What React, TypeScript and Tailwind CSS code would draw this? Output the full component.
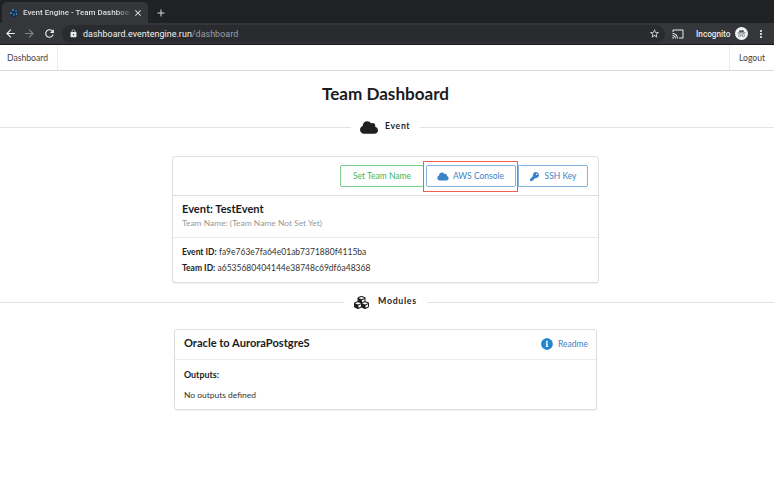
import type { ReactNode } from "react";
import { FaCloud, FaCubes, FaInfoCircle, FaKey } from "react-icons/fa";
import {
  MdAdd,
  MdArrowBack,
  MdArrowForward,
  MdCast,
  MdClose,
  MdLock,
  MdMoreVert,
  MdRefresh,
  MdStarBorder,
} from "react-icons/md";

function Favicon() {
  return (
    <svg viewBox="0 0 10 10" className="size-[10px] shrink-0">
      <path d="M3 1h4l2 3-1 4-3 2-3-2-1-4z" fill="#14304d" />
      <path d="M3 1h2v2H3zM1 4h2v2H1z" fill="#3978ad" />
      <path d="M6 2h2v2H6zM4 5h2v3H4z" fill="#235e93" />
      <path d="M7 5h1v2H7z" fill="#4a88b8" />
    </svg>
  );
}

function IncognitoBadge() {
  return (
    <svg viewBox="0 0 14 14" className="ml-[5px] size-[13px] shrink-0">
      <circle cx="7" cy="7" r="7" fill="#f1f3f4" />
      <path d="M4.3 5.6 5 3.2l2 .5 2-.5.7 2.4z" fill="#4a4d51" />
      <path d="M2.6 6.4h8.8" stroke="#4a4d51" strokeWidth="0.8" />
      <g fill="none" stroke="#4a4d51" strokeWidth="0.6">
        <circle cx="4.9" cy="9.2" r="1.3" />
        <circle cx="9.1" cy="9.2" r="1.3" />
        <path d="M6.2 9q.8-.5 1.6 0" />
      </g>
    </svg>
  );
}

function BrowserChrome() {
  return (
    <header className="h-[45px] border-b border-[#17181a] bg-[#202124] font-[Roboto,sans-serif]">
      <div className="flex h-[23px] items-end pl-[2px]">
        <div className="flex h-[21px] w-[146px] items-center rounded-t-[5px] bg-[#35363a] pl-[7px]">
          <Favicon />
          <div className="ml-[4px] w-[107px] bg-linear-to-r from-[#e8eaed] from-88% to-[#45464a] bg-clip-text text-[8px] leading-[14px] font-medium whitespace-nowrap text-transparent">
            Event Engine - Team Dashboar
          </div>
          <MdClose className="ml-[3px] size-[10px] shrink-0 text-[#f5f5f5]" />
        </div>
        <MdAdd className="mb-[4px] ml-[7px] size-[12px] text-[#d5d7da]" />
      </div>
      <div className="flex h-[21px] items-center bg-[#35363a] pl-[4px]">
        <MdArrowBack className="size-[13px] text-[#f1f3f4]" />
        <MdArrowForward className="ml-[6px] size-[13px] text-[#85878a]" />
        <MdRefresh className="ml-[7px] size-[13px] text-[#f1f3f4]" />
        <div className="ml-[6px] flex h-[18px] w-[603px] items-center rounded-full bg-[#292b2e] pr-[5px] pl-[7px]">
          <MdLock className="size-[9px] text-[#e8eaed]" />
          <div className="ml-[5px] text-[8.9px] leading-[14px] tracking-[0.06px] text-[#9aa0a6]">
            <span className="text-[#f1f3f4]">dashboard.eventengine.run</span>
            /dashboard
          </div>
          <MdStarBorder className="ml-auto size-[11px] text-[#e0e2e5]" />
        </div>
        <MdCast className="ml-[7px] size-[12px] text-[#e8eaed]" />
        <span className="ml-[12px] text-[8.2px] leading-[14px] font-medium text-[#e8eaed]">Incognito</span>
        <IncognitoBadge />
        <MdMoreVert className="ml-[7px] size-[12px] text-[#f1f3f4]" />
      </div>
    </header>
  );
}

function Divider({ children }: { children: ReactNode }) {
  return (
    <div className="flex h-[16px] items-center">
      <div className="h-px flex-1 bg-[#e2e3e3]" />
      {children}
      <div className="h-px flex-1 bg-[#e2e3e3]" />
    </div>
  );
}

export default function App() {
  return (
    <div className="h-[483px] w-[774px] overflow-hidden bg-white font-[Lato,sans-serif] text-[#1f1f1f]">
      <BrowserChrome />
      <nav className="flex h-[26px] justify-between border-b border-[#d9dadb] text-[8.6px] leading-[26px] text-[#444]">
        <a className="w-[58px] border-r border-[#ececec] pl-[7px]">Dashboard</a>
        <a className="w-[45px] border-l border-[#ececec] pl-[9px]">Logout</a>
      </nav>
      <main className="-ml-[3px]">
        <h1 className="mt-[12px] h-[22px] text-center text-[17.1px] leading-[22px] font-bold text-[#1b1c1d]">
          Team Dashboard
        </h1>
        <div className="mt-[14px]">
          <Divider>
            <h2 className="flex w-[69px] items-center pl-[9px] text-[8.7px] leading-[12px] font-bold tracking-[0.65px]">
              <FaCloud className="h-[15px] w-[18px]" />
              <span className="-mt-[2px] ml-[7px]">Event</span>
            </h2>
          </Divider>
        </div>

        <section className="mx-auto mt-[21px] h-[127px] w-[427px] rounded-[3px] border border-[#dcddde] shadow-[0_1px_1px_#f0f0f0]">
          <div className="flex h-[39px] items-center justify-end border-b border-[#dcddde] pr-[10px] text-[8.5px] leading-[20px]">
            <button className="h-[22px] w-[84px] rounded-[2px] border border-[#7bcd8c] text-[#3fb858]">
              Set Team Name
            </button>
            <div className="-ml-px flex h-[31px] w-[95px] items-center justify-center bg-[rgb(240,96,77)] p-px">
              <div className="flex h-full w-full items-center justify-center bg-white">
                <button className="flex h-[22px] w-[90px] items-center justify-center rounded-[2px] border border-[#86b4e0] text-[#3b83c8]">
                  <FaCloud className="mr-[4px] h-[9px] w-[12px]" />
                  AWS Console
                </button>
              </div>
            </div>
            <button className="flex h-[22px] w-[70px] items-center justify-center rounded-r-[2px] border border-[#86b4e0] text-[#3b83c8]">
              <FaKey className="mr-[6px] size-[9px]" />
              SSH Key
            </button>
          </div>
          <div className="h-[42px] border-b border-[#ebebec] pt-[6px] pl-[9px]">
            <h3 className="text-[11.1px] leading-[14px] font-bold text-[#1b1c1d]">Event: TestEvent</h3>
            <p className="text-[8.45px] leading-[14px] text-[#999]">Team Name: (Team Name Not Set Yet)</p>
          </div>
          <div className="pt-[6px] pl-[9px] text-[8.5px] leading-[16px] text-[#333]">
            <p>
              <b className="text-[#1b1c1d]">Event ID:</b> fa9e763e7fa64e01ab7371880f4115ba
            </p>
            <p>
              <b className="text-[#1b1c1d]">Team ID:</b> a6535680404144e38748c69df6a48368
            </p>
          </div>
        </section>

        <div className="mt-[11px]">
          <Divider>
            <h2 className="flex w-[83px] items-center pl-[10px] text-[8.8px] leading-[12px] font-bold tracking-[0.7px]">
              <FaCubes className="size-[15px]" />
              <span className="-mt-[2px] ml-[9px]">Modules</span>
            </h2>
          </Divider>
        </div>

        <section className="mx-auto mt-[19px] h-[81px] w-[423px] rounded-[3px] border border-[#dcddde] shadow-[0_1px_1px_#f0f0f0]">
          <div className="flex h-[30px] items-center justify-between border-b border-[#ebebec] pr-[8px] pl-[9px]">
            <h3 className="-mt-[4px] text-[11.1px] leading-[14px] font-bold text-[#1b1c1d]">Oracle to AuroraPostgreS</h3>
            <a className="-mt-px flex items-center text-[8.5px] leading-[14px] text-[#4183c4]">
              <FaInfoCircle className="mr-[5px] size-[12px] text-[#2185d0]" />
              Readme
            </a>
          </div>
          <div className="pt-[8px] pl-[9px] text-[8.45px] leading-[14px] text-[#333]">
            <h4 className="text-[8.9px] font-bold text-[#1b1c1d]">Outputs:</h4>
            <p className="mt-[6px]">No outputs defined</p>
          </div>
        </section>
      </main>
    </div>
  );
}
